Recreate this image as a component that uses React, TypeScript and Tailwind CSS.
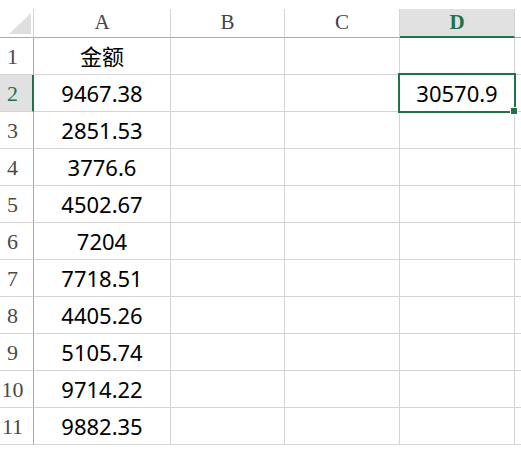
import React from "react";

const rows: [number, string, string][] = [
  [1, "金额", ""],
  [2, "9467.38", "30570.9"],
  [3, "2851.53", ""],
  [4, "3776.6", ""],
  [5, "4502.67", ""],
  [6, "7204", ""],
  [7, "7718.51", ""],
  [8, "4405.26", ""],
  [9, "5105.74", ""],
  [10, "9714.22", ""],
  [11, "9882.35", ""],
];

const serif = { fontFamily: '"Liberation Serif", "DejaVu Serif", serif' };
const sans = { fontFamily: '"Noto Sans", "Noto Sans CJK SC", sans-serif' };

export default function App() {
  return (
    <div className="w-[521px] h-[449px] overflow-hidden bg-white pt-[9px] relative">
      {/* header row */}
      <div className="flex h-[29px]">
        <div className="w-[34px] h-full border-r border-r-[#d4d4d4] border-b border-b-[#ababab] relative shrink-0">
          <svg className="absolute left-[9px] top-[4px]" width="23" height="22" viewBox="0 0 23 22">
            <polygon points="0,21 22,21 22,0" fill="#dfdfdf" />
          </svg>
        </div>
        <div className="w-[137px] shrink-0 border-r border-r-[#d4d4d4] border-b border-b-[#ababab] flex items-center justify-center text-[21px] text-[#444]" style={serif}>A</div>
        <div className="w-[114px] shrink-0 border-r border-r-[#d4d4d4] border-b border-b-[#ababab] flex items-center justify-center text-[21px] text-[#444]" style={serif}>B</div>
        <div className="w-[115px] shrink-0 border-r border-r-[#d4d4d4] border-b border-b-[#ababab] flex items-center justify-center text-[21px] text-[#444]" style={serif}>C</div>
        <div className="w-[115px] shrink-0 border-r border-r-[#d4d4d4] bg-[#e1e1e1] border-b-2 border-b-[#217346] flex items-center justify-center text-[21px] font-bold text-[#217346]" style={serif}>D</div>
        <div className="flex-1 border-b border-b-[#ababab]" />
      </div>
      {rows.map(([n, a, d]) => {
        const sel = n === 2;
        return (
          <div key={n} className="flex h-[37px]">
            <div
              className={
                sel
                  ? "w-[34px] shrink-0 bg-[#e1e1e1] border-r-2 border-r-[#217346] border-b border-b-[#d4d4d4] flex items-center justify-center pr-[7px] text-[22px] text-[#217346]"
                  : "w-[34px] shrink-0 border-r border-r-[#a8a8a8] border-b border-b-[#d4d4d4] flex items-center justify-center pr-[8px] text-[22px] text-[#4a4a4a]"
              }
              style={serif}
            >
              {n}
            </div>
            <div className="w-[137px] shrink-0 border-r border-b border-[#d4d4d4] flex items-center justify-center text-[22px] text-black" style={sans}>{a}</div>
            <div className="w-[114px] shrink-0 border-r border-b border-[#d4d4d4]" />
            <div className="w-[115px] shrink-0 border-r border-b border-[#d4d4d4]" />
            <div className="w-[115px] shrink-0 border-r border-b border-[#d4d4d4] flex items-center justify-center text-[22px] text-black" style={sans}>{d}</div>
            <div className="flex-1 border-b border-[#d4d4d4]" />
          </div>
        );
      })}
      {/* selection overlay */}
      <div className="absolute left-[398px] top-[73px] w-[118px] h-[40px] border-2 border-[#217346] pointer-events-none">
        <div className="absolute right-[-4px] bottom-[-4px] w-[6px] h-[6px] bg-[#217346] border border-white box-content" />
      </div>
    </div>
  );
}
